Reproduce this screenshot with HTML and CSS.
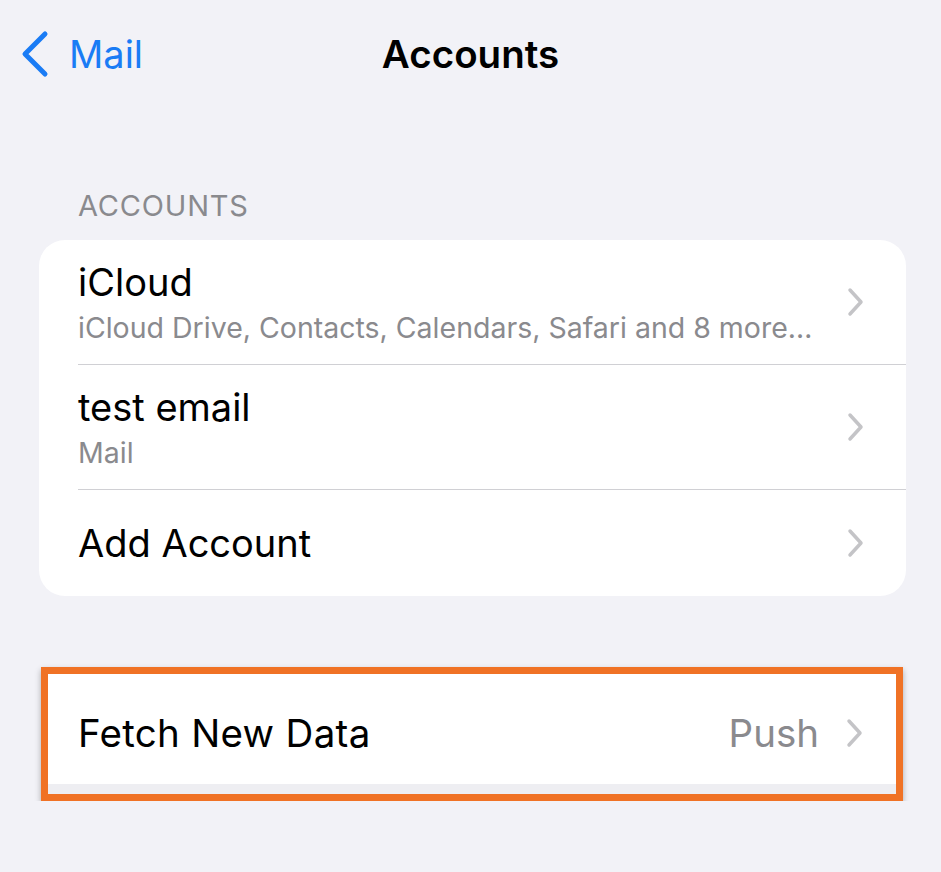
FILE: index.html
```html
<!doctype html>
<html lang="en">
    <head>
        <meta charset="UTF-8" />
        <meta name="viewport" content="width=device-width, initial-scale=1.0" />
        <title>Accounts</title>
        <link rel="stylesheet" href="styles.css">
    </head>
    <body>
        <div class="nav">
            <a class="back" href="#">
                <svg width="30" height="48" viewBox="0 0 30 48"><polyline points="25,4 5,24 25,44" fill="none" stroke="#1a7cf5" stroke-width="5" stroke-linecap="round" stroke-linejoin="round"/></svg>
                <span>Mail</span>
            </a>
            <h1>Accounts</h1>
            <div></div>
        </div>

        <div class="section-header">ACCOUNTS</div>
        <div class="card">
            <div class="row tall">
                <div class="text">
                    <div class="title">iCloud</div>
                    <div class="subtitle">iCloud Drive, Contacts, Calendars, Safari and 8 more…</div>
                </div>
                <svg class="chev" width="20" height="30" viewBox="0 0 20 30"><polyline points="4,3 15,15 4,27" fill="none" stroke="#c4c4c7" stroke-width="3.5" stroke-linecap="round" stroke-linejoin="round"/></svg>
            </div>
            <div class="row tall">
                <div class="text">
                    <div class="title">test email</div>
                    <div class="subtitle">Mail</div>
                </div>
                <svg class="chev" width="20" height="30" viewBox="0 0 20 30"><polyline points="4,3 15,15 4,27" fill="none" stroke="#c4c4c7" stroke-width="3.5" stroke-linecap="round" stroke-linejoin="round"/></svg>
            </div>
            <div class="row">
                <div class="text">
                    <div class="title">Add Account</div>
                </div>
                <svg class="chev" width="20" height="30" viewBox="0 0 20 30"><polyline points="4,3 15,15 4,27" fill="none" stroke="#c4c4c7" stroke-width="3.5" stroke-linecap="round" stroke-linejoin="round"/></svg>
            </div>
        </div>

        <div class="highlight">
            <div class="fetch-row">
                <div class="title">Fetch New Data</div>
                <span class="value">Push</span>
                <svg class="chev" width="20" height="30" viewBox="0 0 20 30"><polyline points="4,3 15,15 4,27" fill="none" stroke="#c4c4c7" stroke-width="3.5" stroke-linecap="round" stroke-linejoin="round"/></svg>
            </div>
        </div>
    </body>
</html>
```

FILE: styles.css
```css
body {
    font-family: Inter, "Noto Sans", sans-serif;
    background-color: #f2f2f7;
    margin: 0;
    color: #000;
}
.nav {
    display: grid;
    grid-template-columns: 1fr auto 1fr;
    align-items: center;
    height: 108px;
}
.back {
    display: flex;
    align-items: center;
    gap: 19px;
    padding-left: 20px;
    color: #1a7cf5;
    text-decoration: none;
    font-size: 38px;
}
.nav h1 {
    margin: 0;
    font-size: 38.5px;
    font-weight: 600;
}
.section-header {
    margin-top: 80px;
    padding-left: 78px;
    font-size: 29px;
    line-height: 36px;
    color: #8a8a8e;
    letter-spacing: 0.8px;
}
.card {
    margin: 16px 35px 0 39px;
    background: #fff;
    border-radius: 26px;
    padding-left: 39px;
}
.row {
    display: flex;
    align-items: center;
    height: 106px;
    padding-right: 40px;
    border-bottom: 1px solid #d0d0d4;
}
.row.tall {
    height: 124px;
}
.row:last-child {
    border-bottom: none;
}
.text {
    flex: 1;
    min-width: 0;
}
.title {
    font-size: 38px;
    line-height: 44px;
}
.fetch-row .title {
    flex: 1;
    font-size: 38.5px;
    letter-spacing: 0.3px;
}
.subtitle {
    font-size: 28.5px;
    line-height: 34px;
    color: #8a8a8e;
    margin-top: 7px;
    white-space: nowrap;
}
.highlight {
    margin: 71px 38px 0 41px;
    border: 7px solid #f07225;
    background: #eeeef2;
    padding-bottom: 10px;
    box-shadow: 0 3px 6px rgba(0, 0, 0, 0.3);
}
.fetch-row {
    display: flex;
    align-items: center;
    height: 102px;
    padding: 8px 31px 0 30px;
    background: #fff;
}
.value {
    font-size: 38.5px;
    color: #8a8a8e;
    margin-right: 26px;
}
```
